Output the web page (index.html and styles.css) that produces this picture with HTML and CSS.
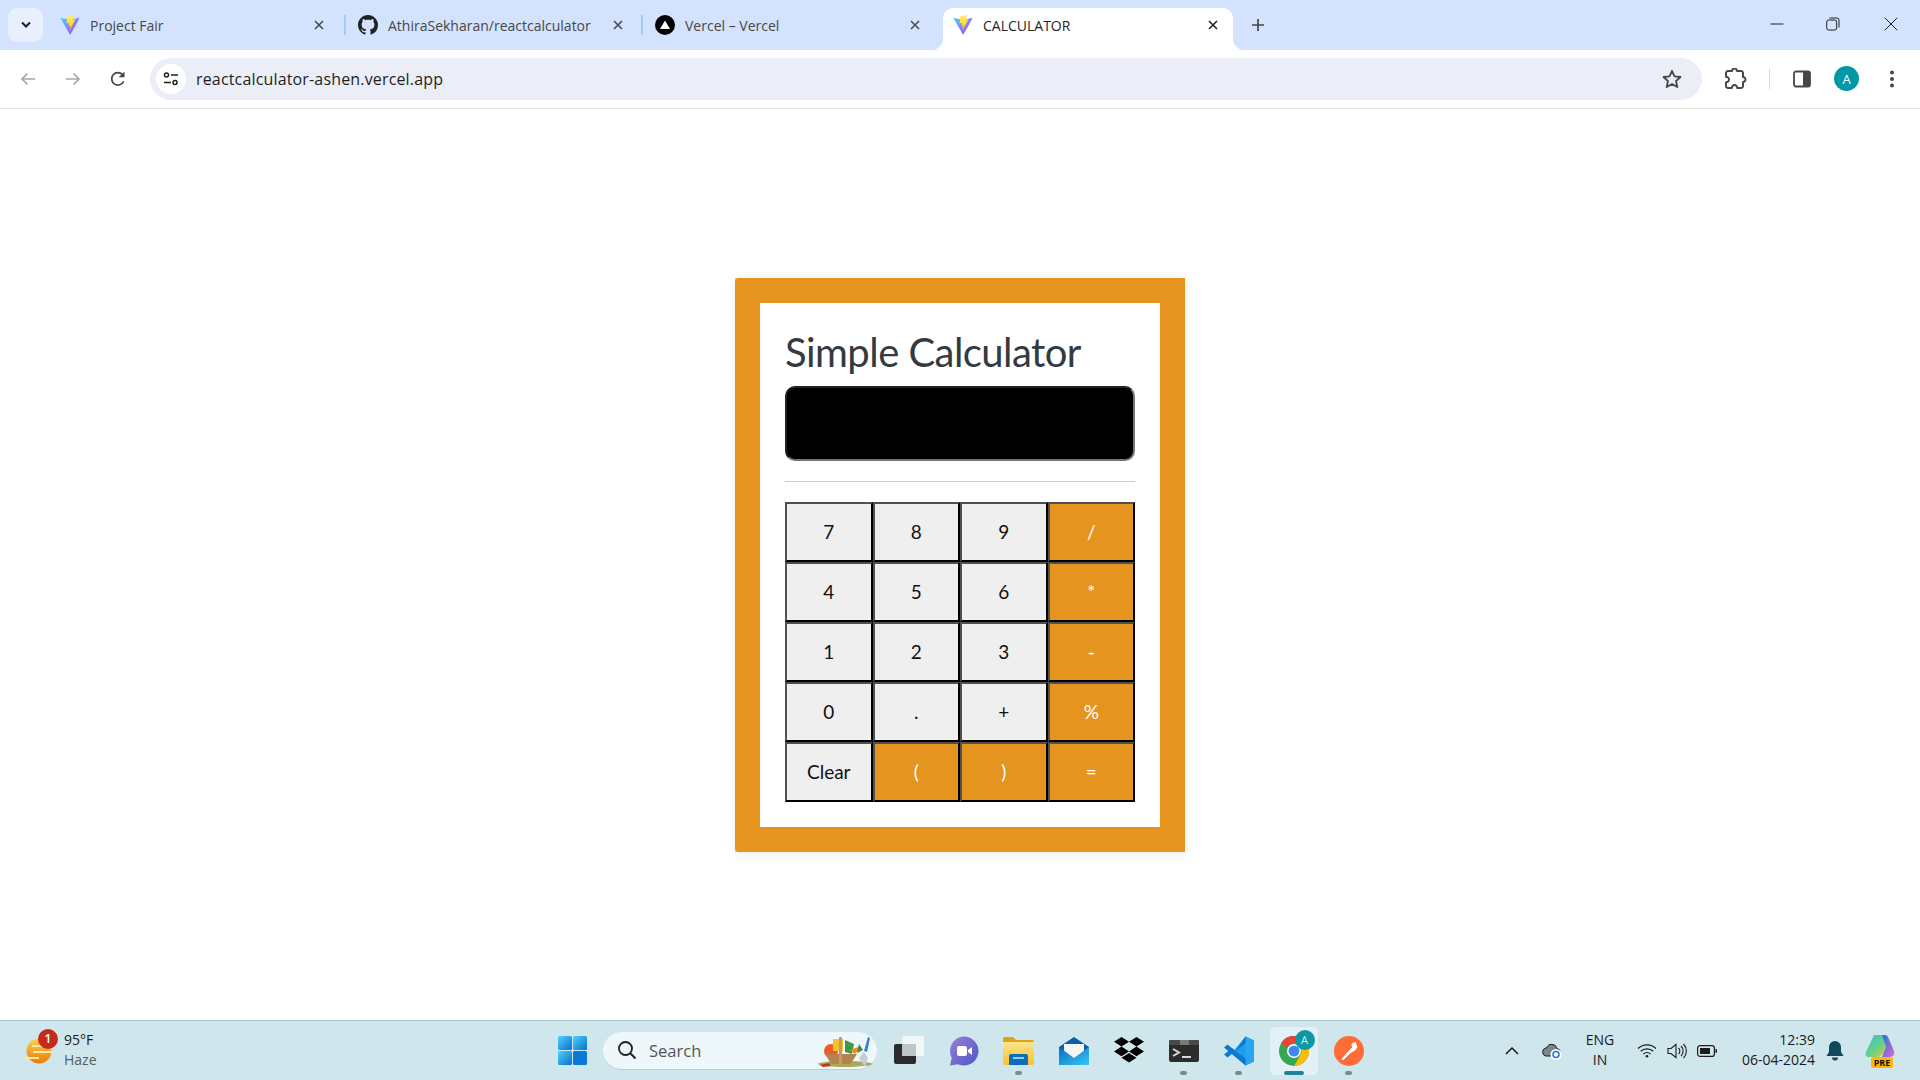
FILE: index.html
```html
<!DOCTYPE html>
<html lang="en">
<head>
<meta charset="utf-8">
<title>CALCULATOR</title>
<link rel="stylesheet" href="styles.css">
</head>
<body>
<svg class="defs" aria-hidden="true">
  <defs>
    <linearGradient id="viteA" x1="0" y1="0" x2="1" y2="1"><stop offset="0" stop-color="#41d1ff"/><stop offset="1" stop-color="#bd34fe"/></linearGradient>
    <linearGradient id="viteB" x1="0" y1="0" x2="0" y2="1"><stop offset="0" stop-color="#ffea83"/><stop offset=".5" stop-color="#ffdd35"/><stop offset="1" stop-color="#ffa800"/></linearGradient>
    <linearGradient id="winG" x1="0" y1="0" x2="1" y2="1"><stop offset="0" stop-color="#4fd2fb"/><stop offset="1" stop-color="#0571cf"/></linearGradient>
    <linearGradient id="sunG" x1="0" y1="0" x2="0" y2="1"><stop offset="0" stop-color="#fcd34a"/><stop offset="1" stop-color="#ea7a05"/></linearGradient>
    <linearGradient id="folderG" x1="0" y1="0" x2="0" y2="1"><stop offset="0" stop-color="#fde48a"/><stop offset="1" stop-color="#fbc02d"/></linearGradient>
    <linearGradient id="mailG" x1="0" y1="0" x2="1" y2="1"><stop offset="0" stop-color="#0a6cc0"/><stop offset="1" stop-color="#35c8f5"/></linearGradient>
    <linearGradient id="chatG" x1="0" y1="0" x2="1" y2="1"><stop offset="0" stop-color="#9a7fd6"/><stop offset="1" stop-color="#4f55c9"/></linearGradient>
    <linearGradient id="copG" x1="0" y1="0" x2="1" y2="1"><stop offset="0" stop-color="#3fb6e8"/><stop offset=".5" stop-color="#5fd28c"/><stop offset="1" stop-color="#f1c232"/></linearGradient>
    <linearGradient id="copH" x1="0" y1="0" x2="1" y2="1"><stop offset="0" stop-color="#1c74e0"/><stop offset="1" stop-color="#e06ad0"/></linearGradient>
    <symbol id="vite" viewBox="2 0.500 28 30">
      <path fill="url(#viteA)" d="M29.88 6.15 16.81 29.51a.71.71 0 0 1-1.24 0L2.25 6.15a.71.71 0 0 1 .74-1.05l13.08 2.34a.71.71 0 0 0 .25 0l12.81-2.33a.71.71 0 0 1 .75 1.04Z"/>
      <path fill="url(#viteB)" d="M21.5.5 11.8 2.4a.36.36 0 0 0-.29.33l-.6 10.07a.36.36 0 0 0 .43.37l2.7-.62a.36.36 0 0 1 .43.42l-.8 3.93a.36.36 0 0 0 .46.42l1.67-.5a.36.36 0 0 1 .46.42l-1.27 6.17c-.08.39.43.6.65.27l.15-.23 7.98-15.92a.36.36 0 0 0-.39-.51l-2.8.54a.36.36 0 0 1-.41-.45l1.83-6.33a.36.36 0 0 0-.42-.46Z"/>
    </symbol>
    <symbol id="close" viewBox="0 0 12 12"><path d="M2 2l8 8M10 2l-8 8" fill="none" stroke="currentColor" stroke-width="1.5"/></symbol>
  </defs>
</svg>

<div class="tabstrip">
  <div class="tabsearch"><svg width="12" height="8" viewBox="0 0 12 8"><path d="M2 1.500l4 4 4-4" fill="none" stroke="#1f1f1f" stroke-width="2"/></svg></div>
  <div class="tab tab-one">
    <svg class="favicon"><use href="#vite"/></svg><span class="tab-title">Project Fair</span><svg class="tab-close"><use href="#close"/></svg>
  </div>
  <div class="tab-sep"></div>
  <div class="tab tab-two">
    <svg class="favicon" viewBox="0 0 16 16"><path fill="#1f2328" d="M8 0C3.58 0 0 3.58 0 8c0 3.54 2.29 6.53 5.47 7.59.4.07.55-.17.55-.38 0-.19-.01-.82-.01-1.49-2.01.37-2.53-.49-2.69-.94-.09-.23-.48-.94-.82-1.13-.28-.15-.68-.52-.01-.53.63-.01 1.08.58 1.23.82.72 1.21 1.87.87 2.33.66.07-.52.28-.87.51-1.07-1.78-.2-3.64-.89-3.64-3.95 0-.87.31-1.59.82-2.15-.08-.2-.36-1.02.08-2.12 0 0 .67-.21 2.2.82.64-.18 1.32-.27 2-.27.68 0 1.36.09 2 .27 1.53-1.04 2.2-.82 2.2-.82.44 1.1.16 1.92.08 2.12.51.56.82 1.27.82 2.15 0 3.07-1.87 3.75-3.65 3.95.29.25.54.73.54 1.48 0 1.07-.01 1.93-.01 2.2 0 .21.15.46.55.38A8.013 8.013 0 0016 8c0-4.42-3.58-8-8-8z"/></svg><span class="tab-title">AthiraSekharan/reactcalculator</span><svg class="tab-close"><use href="#close"/></svg>
  </div>
  <div class="tab-sep"></div>
  <div class="tab tab-three">
    <svg class="favicon" viewBox="0 0 20 20"><circle cx="10" cy="10" r="10" fill="#000"/><path d="M10 5.500l5 8.500H5z" fill="#fff"/></svg><span class="tab-title">Vercel – Vercel</span><svg class="tab-close"><use href="#close"/></svg>
  </div>
  <div class="tab tab-active">
    <svg class="favicon"><use href="#vite"/></svg><span class="tab-title">CALCULATOR</span><svg class="tab-close"><use href="#close"/></svg>
  </div>
  <svg class="newtab" width="14" height="14" viewBox="0 0 14 14"><path d="M7 1v12M1 7h12" stroke="#444746" stroke-width="1.7"/></svg>
  <div class="winctl">
    <svg width="14" height="14" viewBox="0 0 14 14"><path d="M.5 7h13" stroke="#222" stroke-width="1"/></svg>
    <svg width="14" height="14" viewBox="0 0 14 14"><rect x=".7" y="3" width="10" height="10" rx="2" fill="none" stroke="#222" stroke-width="1"/><path d="M3.500 1h7.500a2 2 0 0 1 2 2v7.500" fill="none" stroke="#222" stroke-width="1"/></svg>
    <svg class="win-close" width="14" height="14" viewBox="0 0 14 14"><path d="M.7.7l12.600 12.600M13.300.7L.7 13.300" stroke="#222" stroke-width="1"/></svg>
  </div>
</div>

<div class="toolbar">
  <div class="nav">
    <svg width="18" height="18" viewBox="0 0 18 18"><path d="M16 9H3M8.500 3.500L3 9l5.500 5.500" fill="none" stroke="#a6a8ab" stroke-width="1.700"/></svg>
    <svg width="18" height="18" viewBox="0 0 18 18"><path d="M2 9h13M9.500 3.500L15 9l-5.500 5.500" fill="none" stroke="#a6a8ab" stroke-width="1.700"/></svg>
    <svg width="18" height="18" viewBox="0 0 18 18"><path d="M14.600 11.300A6.200 6.200 0 1 1 13.600 4.800" fill="none" stroke="#474747" stroke-width="1.700"/><path d="M15.500 1.500v5.800h-5.800z" fill="#474747"/></svg>
  </div>
  <div class="omnibox">
    <div class="siteinfo"><svg width="16" height="14" viewBox="0 0 16 14"><circle cx="3.500" cy="3" r="2" fill="none" stroke="#1f1f1f" stroke-width="1.500"/><path d="M8 3h7M1 10.500h7" stroke="#1f1f1f" stroke-width="1.500"/><circle cx="12" cy="10.500" r="2" fill="none" stroke="#1f1f1f" stroke-width="1.500"/></svg></div>
    <span class="url">reactcalculator-ashen.vercel.app</span>
    <svg class="star" width="20" height="20" viewBox="0 0 20 20"><path d="M10 1.800l2.500 5.500 6 .7-4.500 4 1.300 6-5.300-3-5.300 3 1.300-6-4.500-4 6-.7z" fill="none" stroke="#474747" stroke-width="1.800" stroke-linejoin="round"/></svg>
  </div>
  <div class="actions">
    <svg class="ext" width="22" height="22" viewBox="2 1 22 22"><path d="M8.800 21H5q-.825 0-1.412-.587Q3 19.825 3 19v-3.800q1.200 0 2.100-.762.900-.763.900-1.938 0-1.175-.9-1.938Q4.200 9.800 3 9.800V6q0-.825.588-1.412Q4.175 4 5 4h4q0-1.050.725-1.775Q10.450 1.500 11.500 1.500q1.050 0 1.775.725Q14 2.950 14 4h4q.825 0 1.413.588Q20 5.175 20 6v4q1.050 0 1.775.725.725.725.725 1.775 0 1.050-.725 1.775Q21.050 15 20 15v4q0 .825-.587 1.413Q18.825 21 18 21h-3.800q0-1.250-.787-2.125Q12.625 18 11.500 18t-1.912.875Q8.800 19.750 8.800 21Z" fill="none" stroke="#474747" stroke-width="2" stroke-linejoin="round"/></svg>
    <div class="act-sep"></div>
    <svg class="panel" width="18" height="18" viewBox="0 0 18 18"><rect x="1" y="1.500" width="16" height="15" rx="2" fill="none" stroke="#474747" stroke-width="1.800"/><path d="M10 1.500h5a2 2 0 0 1 2 2v11a2 2 0 0 1-2 2h-5z" fill="#474747"/></svg>
    <div class="avatar">A</div>
    <svg class="dots" width="6" height="20" viewBox="0 0 6 20"><circle cx="3" cy="3.500" r="2" fill="#474747"/><circle cx="3" cy="10" r="2" fill="#474747"/><circle cx="3" cy="16.500" r="2" fill="#474747"/></svg>
  </div>
</div>

<main class="page">
  <div class="calc">
    <div class="calc-frame">
      <h1 class="calc-title">Simple Calculator</h1>
      <div class="display"></div>
      <hr class="rule">
      <div class="keys">
        <button class="key">7</button><button class="key">8</button><button class="key">9</button><button class="key op">/</button>
        <button class="key">4</button><button class="key">5</button><button class="key">6</button><button class="key op">*</button>
        <button class="key">1</button><button class="key">2</button><button class="key">3</button><button class="key op">-</button>
        <button class="key">0</button><button class="key">.</button><button class="key">+</button><button class="key op">%</button>
        <button class="key">Clear</button><button class="key op">(</button><button class="key op">)</button><button class="key op">=</button>
      </div>
    </div>
  </div>
</main>

<footer class="taskbar">
  <div class="weather">
    <div class="wicon">
      <svg width="28" height="28" viewBox="0 0 28 28"><circle cx="15" cy="14" r="12.500" fill="url(#sunG)"/><path d="M0 21h15M8 9h16M9 15h19" stroke="#fbe7a8" stroke-width="2.200"/></svg>
      <span class="wbadge">1</span>
    </div>
    <div class="wtext"><span class="wtemp">95°F</span><span class="wdesc">Haze</span></div>
  </div>
  <div class="center">
    <svg class="start" width="29" height="29" viewBox="0 0 29 29"><rect width="14" height="14" rx="1.500" fill="url(#winG)"/><rect x="15" width="14" height="14" rx="1.500" fill="url(#winG)"/><rect y="15" width="14" height="14" rx="1.500" fill="url(#winG)"/><rect x="15" y="15" width="14" height="14" rx="1.500" fill="#0a78d4"/></svg>
    <div class="search">
      <svg width="20" height="20" viewBox="0 0 20 20"><circle cx="8.500" cy="8.500" r="6.500" fill="none" stroke="#202020" stroke-width="1.800"/><path d="M13.300 13.300l5.200 5.200" stroke="#202020" stroke-width="2"/></svg>
      <span class="search-label">Search</span>
      <svg class="basket" width="58" height="38" viewBox="0 0 58 38">
        <ellipse cx="30" cy="33" rx="27" ry="3" fill="#a9a957"/>
        <circle cx="16" cy="20" r="7" fill="#ee5a2b"/>
        <path d="M18 8h10v12H18z" fill="#f4c52a"/>
        <path d="M30 9l9 4-2 10-7-2z" fill="#3d9a4c"/>
        <path d="M35 19l11-4-6 8z" fill="#f08a1d"/>
        <path d="M44 13l4 6-6 3z" fill="#3d8a3c"/>
        <path d="M10 23h32l-5 8a6 6 0 0 1-4 2H19a6 6 0 0 1-4-2z" fill="#b58350"/>
        <path d="M24 6h3v27h-3z" fill="#c99a63"/>
        <path d="M44 27l5-6 4 6-3 9z" fill="#c3cdd3"/>
        <path d="M49 20l4-14 2 1-3 14z" fill="#2f80d6"/>
        <path d="M5 34l9-2 2 3-8 1z" fill="#c9301e"/>
      </svg>
    </div>
    <div class="apps">
      <div class="app taskview">
        <svg width="30" height="30" viewBox="0 0 30 30"><rect x="0" y="8" width="22" height="20" rx="2" fill="#2b2b2b"/><rect x="8" y="0" width="22" height="20" rx="2" fill="#f4f7f8" fill-opacity=".9"/><rect x="8" y="8" width="14" height="12" fill="#bfc4c6"/></svg>
      </div>
      <div class="app">
        <svg width="30" height="30" viewBox="0 0 30 30"><path d="M15 .500a14.500 14.500 0 1 1-6 27.700L1 29.500l1.800-7.500A14.500 14.500 0 0 1 15 .500z" fill="url(#chatG)"/><rect x="8" y="10" width="10" height="10" rx="2" fill="#fff"/><path d="M19 14l4-3v8l-4-3z" fill="#fff"/></svg>
      </div>
      <div class="app running">
        <svg width="31" height="28" viewBox="0 0 31 28"><path d="M0 2a2 2 0 0 1 2-2h8l3 3h16a2 2 0 0 1 2 2v4H0z" fill="#e0a313"/><path d="M0 5h31v21a2 2 0 0 1-2 2H2a2 2 0 0 1-2-2z" fill="url(#folderG)"/><path d="M6 19a2 2 0 0 1 2-2h15a2 2 0 0 1 2 2v9H6z" fill="#0f6cbd"/><rect x="10" y="20" width="11" height="2" fill="#8fd0f5"/></svg>
      </div>
      <div class="app">
        <svg width="30" height="28" viewBox="0 0 30 28"><path d="M15 0l15 10v18H0V10z" fill="#0b5fa8"/><path d="M5 7h20v9l-10 6-10-6z" fill="#f3f5f6"/><path d="M0 10l15 11 15-11v18H0z" fill="url(#mailG)"/></svg>
      </div>
      <div class="app">
        <svg width="30" height="27" viewBox="0 0 30 27"><path d="M7.500 0L15 4.800 7.500 9.600 0 4.800zM22.500 0L30 4.800l-7.500 4.800L15 4.800zM0 14.400l7.500-4.800 7.500 4.800-7.500 4.800zM22.500 9.600l7.500 4.800-7.500 4.800-7.500-4.800zM7.500 20.800l7.500-4.800 7.500 4.800L15 25.600z" fill="#000"/></svg>
      </div>
      <div class="app running">
        <svg width="30" height="22" viewBox="0 0 30 22"><rect width="30" height="22" rx="2" fill="#2c2c2c"/><rect width="30" height="5" rx="1" fill="#4a4a4a"/><rect x="11" width="9" height="5" fill="#7b7b7b"/><path d="M4 9l6 3.500-6 3.500" fill="none" stroke="#d8d8d8" stroke-width="2"/><path d="M13 17h9" stroke="#d8d8d8" stroke-width="2"/></svg>
      </div>
      <div class="app running">
        <svg width="30" height="30" viewBox="0 0 30 30"><path d="M21.500.500L30 4.500v21l-8.500 4L8 17z" fill="#1f9cf0"/><path d="M21.500.500V29.500L30 25.500V4.500z" fill="#2aa5f2"/><path d="M21.500 7.500L11.500 15l10 7.500v7L0 11.500l3.500-3 8 6.500L21.500.500z" fill="#0a7ad1"/><path d="M0 18.500l3.500 3 8-6.500-3.500-3z" fill="#0a7ad1"/></svg>
      </div>
      <div class="app active">
        <svg width="30" height="30" viewBox="0 0 30 30"><circle cx="15" cy="15" r="15" fill="#34a853"/><path d="M15 0a15 15 0 0 1 13 7.500H15a7.500 7.500 0 0 0-7 4.700L2 7A15 15 0 0 1 15 0z" fill="#ea4335"/><path d="M28 7.500A15 15 0 0 1 15 30l6.500-11.300A7.500 7.500 0 0 0 15 7.500z" fill="#fbbc05"/><circle cx="15" cy="15" r="7" fill="#fff"/><circle cx="15" cy="15" r="5.500" fill="#4285f4"/></svg>
        <span class="chrome-badge">A</span>
      </div>
      <div class="app running">
        <svg width="30" height="30" viewBox="0 0 30 30"><circle cx="15" cy="15" r="15" fill="#ff6c37"/><path d="M8 23l7-8 4-4 3-2 1 2-2 3-5 3-7 7zM19 9l3-3" fill="#fff" stroke="#fff" stroke-width="1"/><circle cx="20" cy="9" r="2.500" fill="#fff"/></svg>
      </div>
    </div>
  </div>
  <div class="tray">
    <svg class="tray-up" width="14" height="8" viewBox="0 0 14 8"><path d="M1 7l6-6 6 6" fill="none" stroke="#1b1b1b" stroke-width="1.500"/></svg>
    <svg class="tray-cloud" width="20" height="18" viewBox="0 0 20 18"><path d="M5 14a4 4 0 0 1-.5-8A5.500 5.500 0 0 1 15 6.500 3.800 3.800 0 0 1 15 14z" fill="#7b8487" stroke="#1d1d1d" stroke-width="1"/><circle cx="14" cy="12.500" r="5.500" fill="#fff"/><circle cx="14" cy="12.500" r="3" fill="none" stroke="#1a78d6" stroke-width="1.500"/></svg>
    <div class="lang"><span>ENG</span><span>IN</span></div>
    <svg class="tray-wifi" width="20" height="15" viewBox="0 0 20 15"><path d="M1 5.500a13 13 0 0 1 18 0M3.700 8.300a9.200 9.200 0 0 1 12.600 0M6.500 11a5.200 5.200 0 0 1 7 0" fill="none" stroke="#1d1d1d" stroke-width="1.200"/><circle cx="10" cy="13.300" r="1.300" fill="#1d1d1d"/></svg>
    <svg class="tray-vol" width="20" height="16" viewBox="0 0 20 16"><path d="M1 5.500h3L9 1.500v13l-5-4H1z" fill="none" stroke="#1d1d1d" stroke-width="1.100"/><path d="M11.500 5a4 4 0 0 1 0 6M14 3a7 7 0 0 1 0 10M16.500 1a10 10 0 0 1 0 14" fill="none" stroke="#1d1d1d" stroke-width="1.100"/></svg>
    <svg class="tray-bat" width="20" height="12" viewBox="0 0 20 12"><rect x=".6" y=".6" width="16.800" height="10.800" rx="2.500" fill="none" stroke="#1d1d1d" stroke-width="1.200"/><rect x="3" y="3" width="10" height="6" fill="#1d1d1d"/><path d="M18.500 4v4h.5a1 1 0 0 0 1-1V5a1 1 0 0 0-1-1z" fill="#1d1d1d"/></svg>
    <div class="clock"><span>12:39</span><span>06-04-2024</span></div>
    <svg class="tray-bell" width="18" height="20" viewBox="0 0 18 20"><path d="M9 0a6 6 0 0 1 6 6v5l2.500 4H.5L3 11V6a6 6 0 0 1 6-6z" fill="#11495a"/><path d="M6 16.500h6a3 3 0 0 1-6 0z" fill="#11495a"/></svg>
    <div class="copilot">
      <svg width="30" height="26" viewBox="0 0 30 26"><path d="M9 1h11l4 14-10 8H4c-3 0-4-2-3-5z" fill="url(#copG)"/><path d="M17 1h3a3 3 0 0 1 3 2l6 14c1 3-1 6-4 6h-8l4-10z" fill="url(#copH)"/></svg>
      <span class="pre">PRE</span>
    </div>
  </div>
</footer>
</body>
</html>
```

FILE: styles.css
```css
* { box-sizing: border-box; }
html, body { margin: 0; padding: 0; }
body {
  width: 1920px;
  height: 1080px;
  overflow: hidden;
  display: flex;
  flex-direction: column;
  background: #fff;
  font-family: "Open Sans", "Noto Sans", sans-serif;
}
.defs { position: absolute; width: 0; height: 0; }

/* tab strip */
.tabstrip {
  height: 50px;
  background: #d3e3fd;
  display: flex;
  align-items: flex-end;
  padding-left: 8px;
  flex: none;
}
.tabsearch {
  width: 35px;
  height: 34px;
  margin-bottom: 8px;
  border-radius: 9px;
  background: #e9f0fd;
  display: flex;
  align-items: center;
  justify-content: center;
}
.tab {
  height: 42px;
  padding-bottom: 8px;
  display: flex;
  align-items: center;
  font-size: 14px;
  color: #474747;
  flex: none;
}
.tab-one { width: 292px; margin-left: 9px; padding-left: 8px; padding-right: 19px; }
.tab-two { width: 295px; padding-left: 12px; padding-right: 17px; }
.tab-three { width: 300px; padding-left: 12px; padding-right: 22px; }
.tab-active {
  width: 290px;
  padding-left: 10px;
  padding-right: 14px;
  color: #1f1f1f;
  background: #fff;
  border-radius: 10px 10px 0 0;
  position: relative;
}
.tab-active::before,
.tab-active::after {
  content: "";
  position: absolute;
  bottom: 0;
  width: 12px;
  height: 12px;
}
.tab-active::before { left: -12px; background: radial-gradient(circle at 0 0, transparent 12px, #fff 12.500px); }
.tab-active::after { right: -12px; background: radial-gradient(circle at 100% 0, transparent 12px, #fff 12.500px); }
.favicon { width: 20px; height: 20px; flex: none; margin-right: 10px; }
.tab-title { flex: 1; white-space: nowrap; }
.tab-close { width: 12px; height: 12px; flex: none; color: #474747; }
.tab-active .tab-close { color: #1f1f1f; }
.tab-sep {
  width: 2px;
  height: 20px;
  margin-bottom: 15px;
  background: #a8c7fa;
  flex: none;
}
.newtab { margin: 0 0 18px 18px; flex: none; }
.winctl {
  margin-left: auto;
  height: 50px;
  align-self: flex-start;
  display: flex;
  align-items: center;
  gap: 42px;
  padding: 0 22px 2px 0;
}
.win-close { margin-left: 2px; }

/* toolbar */
.toolbar {
  height: 59px;
  background: #fff;
  border-bottom: 1px solid #e3e3e3;
  border-radius: 10px 10px 0 0;
  display: flex;
  align-items: center;
  padding: 0 0 1px 19px;
  flex: none;
}
.nav { display: flex; align-items: center; gap: 27px; width: 131px; }
.omnibox {
  width: 1552px;
  height: 42px;
  border-radius: 21px;
  background: #ebeef7;
  display: flex;
  align-items: center;
  padding: 0 14px 0 6px;
}
.siteinfo {
  width: 30px;
  height: 30px;
  border-radius: 50%;
  background: #fff;
  display: flex;
  align-items: center;
  justify-content: center;
}
.url {
  margin-left: 10px;
  font-size: 16px;
  letter-spacing: .16px;
  color: #1f1f1f;
  flex: 1;
}
.star { margin-right: 6px; }
.actions { display: flex; align-items: center; margin-left: 23px; }
.act-sep { width: 1px; height: 20px; background: #c6dafb; margin: 0 23px 0 22px; }
.avatar {
  width: 25px;
  height: 25px;
  border-radius: 50%;
  background: #0097a7;
  color: #fff;
  font-size: 13px;
  display: flex;
  align-items: center;
  justify-content: center;
  margin-left: 23px;
}
.dots { margin-left: 30px; }

/* page */
.page {
  flex: 1;
  display: flex;
  align-items: center;
  justify-content: center;
}
.calc {
  width: 450px;
  height: 574px;
  background: #ffe600;
  box-shadow: 0 2px 12px rgba(0, 0, 0, .08);
}
.calc-frame {
  height: 100%;
  border: 25px solid #e5941f;
  border-radius: 4px 0 0 4px;
  padding: 25px;
  background: #fff;
}
.calc-title {
  margin: 0 0 10px;
  font-family: Lato, "Open Sans", sans-serif;
  font-weight: 400;
  font-size: 40px;
  line-height: 48px;
  letter-spacing: -.55px;
  color: #333a40;
}
.display {
  height: 75px;
  border-radius: 10px;
  background: #000;
  border: 2px solid;
  border-color: #222 #767676 #767676 #222;
}
.rule {
  margin: 20px 0;
  border: 0;
  border-top: 1px solid #ccc;
}
.keys {
  display: grid;
  grid-template-columns: repeat(4, 1fr);
  grid-auto-rows: 60px;
}
.key {
  margin: 0;
  padding: 0;
  border: 2px solid;
  border-color: #505050 #000 #000 #505050;
  background: #efefef;
  color: #111;
  font-family: Lato, "Open Sans", sans-serif;
  font-size: 19px;
}
.op { background: #e5941f; color: #fff; }

/* taskbar */
.taskbar {
  height: 60px;
  flex: none;
  background: #cfe6ec;
  border-top: 1px solid #a9c0c8;
  display: flex;
  align-items: center;
}
.weather { display: flex; align-items: center; width: 558px; padding-left: 24px; }
.wicon { position: relative; width: 40px; height: 28px; }
.wbadge {
  position: absolute;
  left: 14px;
  top: -8px;
  width: 20px;
  height: 20px;
  border-radius: 50%;
  background: #c42b1c;
  color: #fff;
  font-size: 12px;
  font-weight: 600;
  display: flex;
  align-items: center;
  justify-content: center;
}
.wtext { display: flex; flex-direction: column; font-size: 14px; line-height: 20px; margin-top: -2px; }
.wtemp { color: #1b1b1b; }
.wdesc { color: #555f63; }
.center { display: flex; align-items: center; }
.start { flex: none; }
.search {
  width: 274px;
  height: 38px;
  margin-left: 16px;
  border-radius: 19px;
  background: #eef7fa;
  border-bottom: 1px solid #b9cdd3;
  display: flex;
  align-items: center;
  padding-left: 14px;
}
.search-label { margin-left: 12px; font-size: 16.500px; color: #555; flex: 1; }
.basket { margin-right: 4px; }
.apps { display: flex; align-items: center; margin-left: 4px; }
.app {
  width: 55px;
  height: 48px;
  display: flex;
  align-items: center;
  justify-content: center;
  position: relative;
  flex: none;
}
.app.running::after {
  content: "";
  position: absolute;
  bottom: 0;
  left: 24px;
  width: 7px;
  height: 4px;
  border-radius: 2px;
  background: #7a8b90;
}
.app.active {
  width: 48px;
  margin: 0 3.500px;
  border-radius: 5px;
  background: #e2f1f7;
}
.app.active::after {
  content: "";
  position: absolute;
  bottom: 0;
  left: 14px;
  width: 20px;
  height: 4px;
  border-radius: 2px;
  background: #1e8598;
}
.chrome-badge {
  position: absolute;
  top: 3px;
  right: 3px;
  width: 20px;
  height: 20px;
  border-radius: 50%;
  background: #0e97a5;
  color: #cfeef2;
  font-size: 11px;
  display: flex;
  align-items: center;
  justify-content: center;
}
.tray { display: flex; align-items: center; margin-left: auto; padding-right: 25px; }
.tray-cloud { margin-left: 23px; }
.lang {
  display: flex;
  flex-direction: column;
  align-items: center;
  width: 40px;
  margin-top: -2px;
  margin-left: 18px;
  font-size: 14px;
  line-height: 20px;
  color: #1b1b1b;
}
.tray-wifi { margin-left: 17px; }
.tray-vol { margin-left: 10px; }
.tray-bat { margin-left: 10px; }
.clock {
  display: flex;
  flex-direction: column;
  align-items: flex-end;
  width: 90px;
  margin-top: -2px;
  margin-left: 8px;
  font-size: 14px;
  line-height: 20px;
  color: #1b1b1b;
}
.tray-bell { margin-left: 11px; }
.copilot { position: relative; width: 30px; height: 34px; margin-left: 21px; }
.pre {
  position: absolute;
  left: 6px;
  bottom: 0;
  width: 22px;
  height: 11px;
  border-radius: 2px;
  background: #fcb900;
  color: #111;
  font-size: 9px;
  font-weight: 700;
  line-height: 11px;
  text-align: center;
}
```
